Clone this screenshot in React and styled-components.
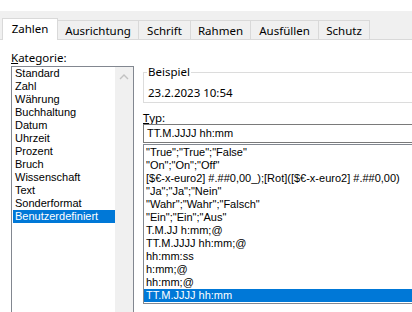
import styled, { createGlobalStyle } from "styled-components";

const tabs = [
  { label: "Zahlen", width: 56 },
  { label: "Ausrichtung", width: 82 },
  { label: "Schrift", width: 53 },
  { label: "Rahmen", width: 61 },
  { label: "Ausfüllen", width: 69 },
  { label: "Schutz", width: 52 },
];

const categories = [
  "Standard", "Zahl", "Währung", "Buchhaltung", "Datum", "Uhrzeit", "Prozent",
  "Bruch", "Wissenschaft", "Text", "Sonderformat", "Benutzerdefiniert",
];

const formats = [
  '"True";"True";"False"',
  '"On";"On";"Off"',
  "[$€-x-euro2] #.##0,00_);[Rot]([$€-x-euro2] #.##0,00)",
  '"Ja";"Ja";"Nein"',
  '"Wahr";"Wahr";"Falsch"',
  '"Ein";"Ein";"Aus"',
  "T.M.JJ h:mm;@",
  "TT.M.JJJJ hh:mm;@",
  "hh:mm:ss",
  "h:mm;@",
  "hh:mm;@",
  "TT.M.JJJJ hh:mm",
];

export default function App() {
  return (
    <>
      <GlobalStyle />
      <Dialog>
        <TabStrip>
          {tabs.map((t, i) => (
            <Tab key={t.label} $active={i === 0} $width={t.width}>
              {t.label}
            </Tab>
          ))}
        </TabStrip>
        <Panel>
          <LeftCol>
            <Label><u>K</u>ategorie:</Label>
            <CategoryList>
              <Items>
                {categories.map((c) => (
                  <Item key={c} $selected={c === "Benutzerdefiniert"}>{c}</Item>
                ))}
              </Items>
              <ScrollTrack>
                <svg width="10" height="6" viewBox="0 0 10 6">
                  <path d="M1 5 L5 1 L9 5" fill="none" stroke="#c2c2c2" strokeWidth="1.4" />
                </svg>
              </ScrollTrack>
            </CategoryList>
          </LeftCol>
          <RightCol>
            <GroupBox>
              <Legend>Beispiel</Legend>
              <Sample>23.2.2023 10:54</Sample>
            </GroupBox>
            <TypeLabel><u>T</u>yp:</TypeLabel>
            <TypeInput>TT.M.JJJJ hh:mm</TypeInput>
            <FormatList>
              {formats.map((f, i) => (
                <FormatItem key={i} $selected={i === formats.length - 1}>{f}</FormatItem>
              ))}
            </FormatList>
          </RightCol>
        </Panel>
      </Dialog>
    </>
  );
}

const GlobalStyle = createGlobalStyle`
  body {
    margin: 0;
    background: #ffffff;
    overflow: hidden;
  }
`;

const Dialog = styled.div`
  width: 412px;
  height: 312px;
  overflow: hidden;
  padding-top: 11px;
  box-sizing: border-box;
  font-family: "Noto Sans", "Open Sans", sans-serif;
  font-size: 11.5px;
  color: #000;
`;

const TabStrip = styled.div`
  display: flex;
  align-items: flex-end;
  height: 28px;
  padding-left: 2px;
  background: #f0f0f0;
  border-bottom: 1px solid #d9d9d9;
`;

const Tab = styled.div`
  box-sizing: border-box;
  width: ${(p) => p.$width}px;
  height: ${(p) => (p.$active ? 22 : 19)}px;
  margin-left: -1px;
  margin-bottom: ${(p) => (p.$active ? -1 : 0)}px;
  border: 1px solid #d9d9d9;
  border-bottom: none;
  background: ${(p) => (p.$active ? "#ffffff" : "#f0f0f0")};
  position: relative;
  z-index: ${(p) => (p.$active ? 1 : 0)};
  display: flex;
  justify-content: center;
  align-items: center;
  padding-bottom: ${(p) => (p.$active ? 2 : 0)}px;
  white-space: nowrap;

  &:first-child {
    margin-left: 0;
  }
`;

const Panel = styled.div`
  display: flex;
  gap: 9px;
  padding-left: 11px;
  background: #ffffff;
`;

const LeftCol = styled.div`
  width: 123px;
  flex-shrink: 0;
  display: flex;
  flex-direction: column;
`;

const Label = styled.div`
  padding-top: 10px;
  line-height: 16px;
  height: 26px;
  box-sizing: border-box;
`;

const CategoryList = styled.div`
  display: flex;
  height: 260px;
  border: 1px solid #828790;
  font-family: "Liberation Sans", Arial, sans-serif;
  font-size: 11px;
`;

const Items = styled.div`
  flex: 1;
  padding-left: 1px;
`;

const Item = styled.div`
  height: 13px;
  line-height: 13px;
  padding-left: 2px;
  white-space: nowrap;
  background: ${(p) => (p.$selected ? "#0078d7" : "transparent")};
  color: ${(p) => (p.$selected ? "#ffffff" : "#000000")};
`;

const ScrollTrack = styled.div`
  width: 18px;
  background: #f0f0f0;
  display: flex;
  justify-content: center;
  padding-top: 7px;
  box-sizing: border-box;
`;

const RightCol = styled.div`
  width: 300px;
  flex-shrink: 0;
  display: flex;
  flex-direction: column;
`;

const GroupBox = styled.div`
  position: relative;
  margin-top: 32px;
  height: 31px;
  box-sizing: border-box;
  border: 1px solid #dcdcdc;
`;

const Legend = styled.span`
  position: absolute;
  left: 3px;
  top: -9px;
  padding: 0 1px;
  line-height: 16px;
  background: #ffffff;
`;

const Sample = styled.div`
  padding: 12px 0 0 4px;
  line-height: 16px;
`;

const TypeLabel = styled.div`
  height: 21px;
  box-sizing: border-box;
  padding-top: 8px;
  line-height: 13px;
`;

const TypeInput = styled.div`
  height: 19px;
  box-sizing: border-box;
  border: 1px solid #7a7a7a;
  padding-left: 3px;
  line-height: 17px;
  font-family: "Liberation Sans", Arial, sans-serif;
  font-size: 11px;
`;

const FormatList = styled.div`
  margin-top: 1px;
  border: 1px solid #828790;
  padding: 1px 0;
  font-family: "Liberation Sans", Arial, sans-serif;
  font-size: 11px;
`;

const FormatItem = styled.div`
  height: 13px;
  line-height: 13px;
  padding-left: 2px;
  white-space: nowrap;
  background: ${(p) => (p.$selected ? "#0078d7" : "transparent")};
  color: ${(p) => (p.$selected ? "#ffffff" : "#000000")};
`;
